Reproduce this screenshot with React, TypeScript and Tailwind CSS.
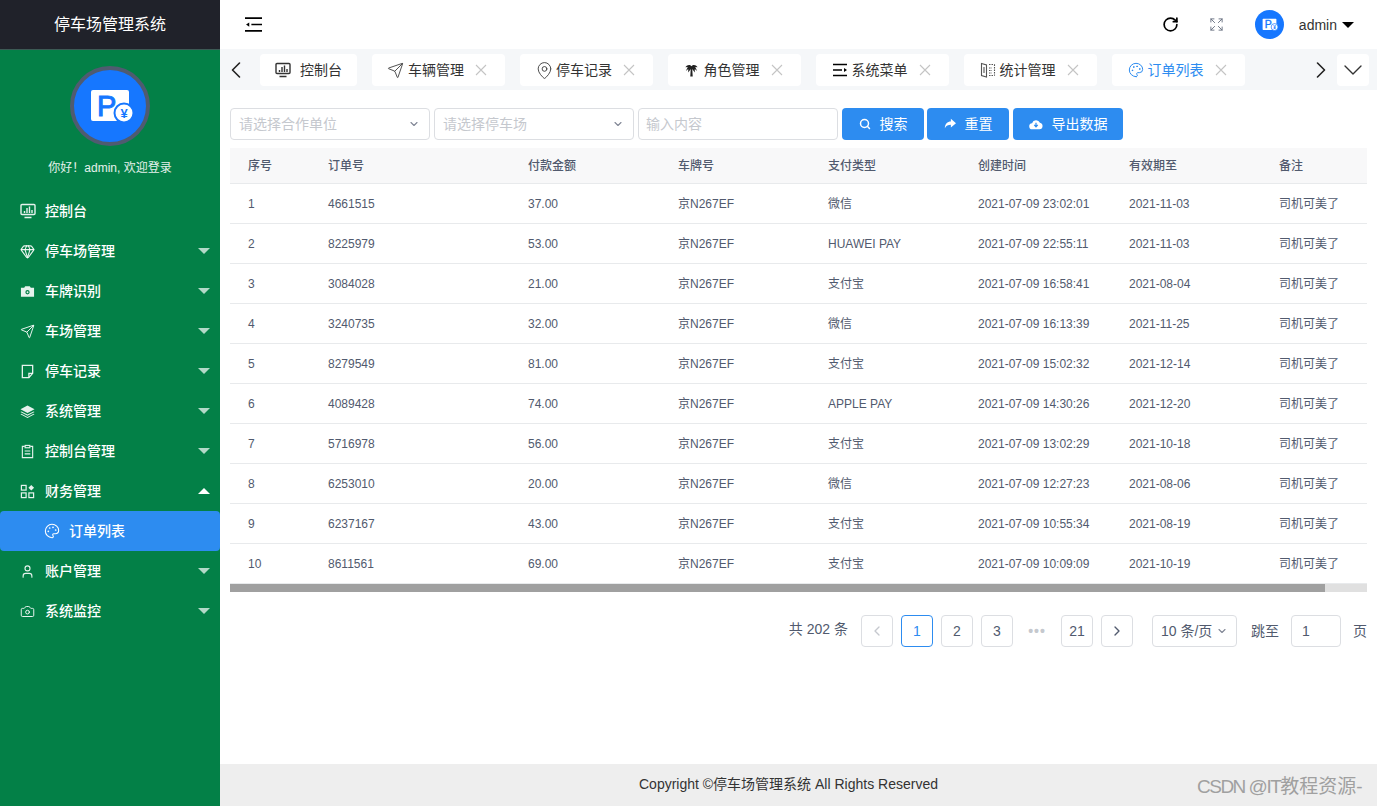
import { Camera, ChevronDown, ChevronLeft, ChevronRight, Expand, Gem, MapPin, Palette, RotateCw, Search, Send, User } from "lucide-react";
import type { ReactNode } from "react";

const FONT = "font-['Liberation_Sans','Noto_Sans_CJK_SC',sans-serif]";

function MonitorChart({ className }: { className?: string }) {
  return (
    <svg viewBox="0 0 16 16" className={className} fill="none" stroke="currentColor" strokeWidth="1.4">
      <rect x="1" y="1.500" width="14" height="10" rx="1" />
      <path d="M4.500 10V8M7 10V5M9.500 10V3.500M12 10V7M4.500 14.500h7" />
    </svg>
  );
}

function CameraSolid({ className }: { className?: string }) {
  return (
    <svg viewBox="0 0 16 16" className={className} fill="currentColor">
      <path fillRule="evenodd" d="M1 4h3.500l1-1.500h5L11.500 4H15v9.500H1zM8 6.500a2.300 2.300 0 1 0 0 4.600 2.300 2.300 0 0 0 0-4.600z" />
      <circle cx="8" cy="8.800" r="1" />
    </svg>
  );
}

function NoteFold({ className }: { className?: string }) {
  return (
    <svg viewBox="0 0 16 16" className={className} fill="none" stroke="currentColor" strokeWidth="1.4">
      <path d="M2.500 1.500h11v8.500l-4 4.500h-7z" />
      <path d="M13.500 10H9.500v4.500" />
    </svg>
  );
}

function Stack({ className }: { className?: string }) {
  return (
    <svg viewBox="0 0 16 16" className={className} fill="currentColor">
      <path d="M8 1.500L15.500 5.500 8 9.500 .5 5.500z" />
      <path d="M1.500 8L8 11.300 14.500 8 15.500 8.500 8 12.500 .5 8.500zM1.500 10.500L8 13.800 14.500 10.500 15.500 11 8 15 .5 11z" />
    </svg>
  );
}

function ClipboardLines({ className }: { className?: string }) {
  return (
    <svg viewBox="0 0 16 16" className={className} fill="none" stroke="currentColor" strokeWidth="1.2">
      <path d="M5 2.500H2.500v12h11v-12H11" />
      <rect x="5.500" y="1.500" width="5" height="2.500" />
      <path d="M5 7.500h6M5 10.500h6" />
    </svg>
  );
}

function Apps({ className }: { className?: string }) {
  return (
    <svg viewBox="0 0 16 16" className={className} fill="none" stroke="currentColor" strokeWidth="1.3">
      <rect x="1.500" y="1.500" width="5" height="5" />
      <rect x="1.500" y="9.500" width="5" height="5" />
      <rect x="9.500" y="9.500" width="5" height="5" />
      <path d="M12 1l3 3-3 3-3-3z" fill="currentColor" stroke="none" />
    </svg>
  );
}

function MenuLines({ className }: { className?: string }) {
  return (
    <svg viewBox="0 0 16 14" className={className} fill="none" stroke="currentColor" strokeWidth="1.6">
      <path d="M0 1h16M0 13h16M6 7h10" />
      <path d="M1 7l3-2v4z" fill="currentColor" stroke="none" />
    </svg>
  );
}

function TabLines({ className }: { className?: string }) {
  return (
    <svg viewBox="0 0 16 14" className={className} fill="none" stroke="currentColor" strokeWidth="1.500">
      <path d="M1 1.500h14M1 12.500h14M1 7h9" />
      <path d="M15 7l-3-2v4z" fill="currentColor" stroke="none" />
    </svg>
  );
}

function BookDots({ className }: { className?: string }) {
  return (
    <svg viewBox="0 0 16 16" className={className} fill="none" stroke="currentColor" strokeWidth="1.100">
      <path d="M1.500 1.500l5 1.500v12l-5-1.500z" />
      <path d="M4 5v6" />
      <path d="M9 2.500h5.500M9 13.500h5.500M14.500 2.500v11M9 6h3M9 8.500h3M9 11h3" strokeDasharray="1.500 1" />
    </svg>
  );
}

function Palm({ className }: { className?: string }) {
  return (
    <svg viewBox="0 0 16 16" className={className} fill="currentColor">
      <path d="M8 3.500C6.500 1.500 3.500 1.500 1.500 4.500L4 4.200 2 8.500 4.500 6.500 4.500 10 7.200 6.500 6.700 14.500h2.600L8.800 6.500 11.500 10 11.500 6.500 14 8.500 12 4.200 14.500 4.500C12.500 1.500 9.500 1.500 8 3.500z" />
    </svg>
  );
}

function CloseX() {
  return (
    <svg viewBox="0 0 12 12" className="w-3 h-3 ml-[11px] text-[#c4c4c4]" fill="none" stroke="currentColor" strokeWidth="1.100">
      <path d="M1 1l10 10M11 1L1 11" />
    </svg>
  );
}

function Logo({ size, ring }: { size: number; ring?: boolean }) {
  return (
    <svg viewBox="0 0 80 80" width={size} height={size}>
      <circle cx="40" cy="40" r={ring ? 38 : 40} fill="#1677ff" stroke={ring ? "#4f5b70" : "none"} strokeWidth={ring ? 4 : 0} />
      <rect x="21" y="24" width="38" height="31" rx="2" fill="#fff" />
      <text x="27" y="50" fontSize="29" fontWeight="400" stroke="#1677ff" strokeWidth="1" fill="#1677ff" fontFamily="Liberation Sans">P</text>
      <circle cx="54" cy="47" r="9.500" fill="#fff" stroke="#1677ff" strokeWidth="2" />
      <text x="54" y="52" fontSize="13" fontWeight="700" textAnchor="middle" fill="#1677ff" fontFamily="Liberation Sans">¥</text>
    </svg>
  );
}

function Caret({ up }: { up?: boolean }) {
  return (
    <span className={`w-0 h-0 border-x-[6px] border-x-transparent ${up ? "border-b-[6px] border-b-white" : "border-t-[6px] border-t-white/70"}`} />
  );
}

const menu: { label: string; icon: ReactNode; caret?: boolean; up?: boolean }[] = [
  { label: "控制台", icon: <MonitorChart className="w-4 h-4" /> },
  { label: "停车场管理", icon: <Gem className="w-[15px] h-[15px]" strokeWidth={1.8} />, caret: true },
  { label: "车牌识别", icon: <CameraSolid className="w-[15px] h-[15px]" />, caret: true },
  { label: "车场管理", icon: <Send className="w-[15px] h-[15px]" strokeWidth={1.6} />, caret: true },
  { label: "停车记录", icon: <NoteFold className="w-[15px] h-[15px]" />, caret: true },
  { label: "系统管理", icon: <Stack className="w-[15px] h-[15px]" />, caret: true },
  { label: "控制台管理", icon: <ClipboardLines className="w-[15px] h-[15px]" />, caret: true },
  { label: "财务管理", icon: <Apps className="w-[15px] h-[15px]" />, caret: true, up: true },
];

const menuAfter: { label: string; icon: ReactNode }[] = [
  { label: "账户管理", icon: <User className="w-[15px] h-[15px]" strokeWidth={1.8} /> },
  { label: "系统监控", icon: <Camera className="w-[15px] h-[15px]" strokeWidth={1.6} /> },
];

function MenuRow({ label, icon, caret, up }: { label: string; icon: ReactNode; caret?: boolean; up?: boolean }) {
  return (
    <div className="h-10 flex items-center pl-[20px] pr-[10px] text-white text-sm font-medium">
      <span className="w-[25px] shrink-0 text-white/90">{icon}</span>
      <span className="flex-1">{label}</span>
      {caret && <Caret up={up} />}
    </div>
  );
}

function Sidebar() {
  return (
    <aside className="w-[220px] shrink-0 bg-[#038047] flex flex-col">
      <div className="h-[50px] shrink-0 bg-[#20222a] border-b border-[#3d5a55] flex items-center justify-center text-white text-base">
        停车场管理系统
      </div>
      <div className="flex flex-col items-center pt-4 h-[141px] shrink-0">
        <Logo size={80} ring />
        <div className="mt-[14px] text-xs text-white/90">你好！admin, 欢迎登录</div>
      </div>
      {menu.map(m => <MenuRow key={m.label} {...m} />)}
      <div className="h-10 bg-[#2d8cf0] rounded-sm flex items-center pl-[44px] text-white text-sm font-medium">
        <Palette className="w-4 h-4 mr-[9px]" strokeWidth={1.6} />
        订单列表
      </div>
      {menuAfter.map(m => <MenuRow key={m.label} label={m.label} icon={m.icon} caret />)}
    </aside>
  );
}

function Header() {
  return (
    <header className="h-[49px] shrink-0 bg-white flex items-center pl-[25px] pr-[23px]">
      <MenuLines className="w-[17px] h-[15px] text-black" />
      <div className="flex-1" />
      <RotateCw className="w-[17px] h-[17px] text-black" strokeWidth={2.4} />
      <Expand className="w-[15px] h-[15px] text-gray-500 ml-[30px]" strokeWidth={1.5} />
      <span className="ml-[31px]"><Logo size={29} /></span>
      <span className="ml-[15px] text-sm text-[#333]">admin</span>
      <span className="ml-[5px] w-0 h-0 border-x-[6px] border-x-transparent border-t-[6px] border-t-black" />
    </header>
  );
}

const tabs: { label: string; icon: ReactNode; width: string; closable?: boolean; active?: boolean }[] = [
  { label: "控制台", icon: <MonitorChart className="w-4 h-4 mr-[9px]" />, width: "w-[97px]" },
  { label: "车辆管理", icon: <Send className="w-[17px] h-[17px] mr-[4px]" strokeWidth={1.2} />, width: "w-[133px]", closable: true },
  { label: "停车记录", icon: <MapPin className="w-[19px] h-[19px] mr-[2px]" strokeWidth={1.1} />, width: "w-[133px]", closable: true },
  { label: "角色管理", icon: <Palm className="w-[15px] h-[15px] mr-[5px] text-[#222]" />, width: "w-[133px]", closable: true },
  { label: "系统菜单", icon: <TabLines className="w-4 h-[14px] mr-[4px] text-black" />, width: "w-[133px]", closable: true },
  { label: "统计管理", icon: <BookDots className="w-4 h-4 mr-[4px] text-[#555]" />, width: "w-[133px]", closable: true },
  { label: "订单列表", icon: <Palette className="w-4 h-4 mr-[4px]" strokeWidth={1.5} />, width: "w-[133px]", closable: true, active: true },
];

function TabBar() {
  return (
    <div className="h-[41px] shrink-0 bg-[#f5f7f9] flex items-center pl-[2px] pr-[8px]">
      <ChevronLeft className="w-7 h-7 text-[#222] mr-[10px]" strokeWidth={1.400} />
      <div className="flex gap-[15px] flex-1">
        {tabs.map(t => (
          <div key={t.label} className={`${t.width} h-8 pt-[1px] bg-white rounded-sm flex items-center justify-center text-sm ${t.closable ? "pr-[3px]" : ""} ${t.active ? "text-[#2d8cf0]" : "text-[#333]"}`}>
            {t.icon}
            {t.label}
            {t.closable && <CloseX />}
          </div>
        ))}
      </div>
      <ChevronRight className="w-7 h-7 text-[#222] mr-[2px]" strokeWidth={1.400} />
      <div className="w-8 h-8 bg-white rounded-sm flex items-center justify-center">
        <ChevronDown className="w-8 h-8 text-[#333]" strokeWidth={1} />
      </div>
    </div>
  );
}

function SelectBox({ placeholder }: { placeholder: string }) {
  return (
    <div className="w-[200px] h-8 bg-white border border-[#dcdee2] rounded flex items-center pl-2 pr-[9px] text-sm text-[#c5c8ce]">
      <span className="flex-1">{placeholder}</span>
      <ChevronDown className="w-3 h-3 text-[#808695]" strokeWidth={2.2} />
    </div>
  );
}

function ActionButton({ label, icon, width }: { label: string; icon: ReactNode; width: string }) {
  return (
    <button className={`${width} h-8 bg-[#2d8cf0] rounded text-white text-sm flex items-center justify-center`}>
      {icon}
      {label}
    </button>
  );
}

function Filters() {
  return (
    <div className="flex mt-[18px] mx-[10px]">
      <SelectBox placeholder="请选择合作单位" />
      <div className="w-1" />
      <SelectBox placeholder="请选择停车场" />
      <div className="w-1" />
      <div className="w-[200px] h-8 bg-white border border-[#dcdee2] rounded flex items-center pl-[7px] text-sm text-[#c5c8ce]">输入内容</div>
      <div className="w-1" />
      <ActionButton label="搜索" width="w-[82px]" icon={<Search className="w-3 h-3 mr-[9px]" strokeWidth={3} />} />
      <div className="w-[3px]" />
      <ActionButton
        label="重置"
        width="w-[82px]"
        icon={
          <svg viewBox="0 0 14 12" className="w-3 h-3 mr-[9px]" fill="currentColor">
            <path d="M8 0l6 5-6 5V7C5 7 2.500 8 1 11 1 6 4 3 8 3z" />
          </svg>
        }
      />
      <div className="w-1" />
      <ActionButton
        label="导出数据"
        width="w-[110px]"
        icon={
          <svg viewBox="0 0 16 12" className="w-[14px] h-[14px] mr-[9px]">
            <path d="M4 12a3.500 3.500 0 0 1-.5-7A4.800 4.800 0 0 1 12.500 4.500 3.800 3.800 0 0 1 12 12z" fill="currentColor" />
            <path d="M8 4.500v4M6 7l2 2.200L10 7" stroke="#2d8cf0" strokeWidth="1.400" fill="none" />
          </svg>
        }
      />
    </div>
  );
}

const rows = [
  ["1", "4661515", "37.00", "微信", "2021-07-09 23:02:01", "2021-11-03"],
  ["2", "8225979", "53.00", "HUAWEI PAY", "2021-07-09 22:55:11", "2021-11-03"],
  ["3", "3084028", "21.00", "支付宝", "2021-07-09 16:58:41", "2021-08-04"],
  ["4", "3240735", "32.00", "微信", "2021-07-09 16:13:39", "2021-11-25"],
  ["5", "8279549", "81.00", "支付宝", "2021-07-09 15:02:32", "2021-12-14"],
  ["6", "4089428", "74.00", "APPLE PAY", "2021-07-09 14:30:26", "2021-12-20"],
  ["7", "5716978", "56.00", "支付宝", "2021-07-09 13:02:29", "2021-10-18"],
  ["8", "6253010", "20.00", "微信", "2021-07-09 12:27:23", "2021-08-06"],
  ["9", "6237167", "43.00", "支付宝", "2021-07-09 10:55:34", "2021-08-19"],
  ["10", "8611561", "69.00", "支付宝", "2021-07-09 10:09:09", "2021-10-19"],
];

const columns = ["序号", "订单号", "付款金额", "车牌号", "支付类型", "创建时间", "有效期至", "备注"];

function OrdersTable() {
  return (
    <div className="mt-2 mx-[10px]">
      <table className="w-[1137px] table-fixed border-separate border-spacing-0 text-xs text-[#515a6e]">
        <colgroup>
          <col className="w-[80px]" />
          <col className="w-[200px]" />
          <col className="w-[150px]" />
          <col className="w-[150px]" />
          <col className="w-[150px]" />
          <col className="w-[151px]" />
          <col className="w-[150px]" />
          <col />
        </colgroup>
        <thead>
          <tr className="h-9">
            {columns.map(c => (
              <th key={c} className="text-left font-medium pl-[18px] bg-[#f8f8f9] border-b border-[#e8eaec]">{c}</th>
            ))}
          </tr>
        </thead>
        <tbody>
          {rows.map(r => (
            <tr key={r[0]} className="h-10">
              {[r[0], r[1], r[2], "京N267EF", r[3], r[4], r[5], "司机可美了"].map((v, i) => (
                <td key={i} className="pl-[18px] border-b border-[#e8eaec]">{v}</td>
              ))}
            </tr>
          ))}
        </tbody>
      </table>
      <div className="h-2 bg-[#e0e0e0]">
        <div className="h-full w-[1095px] bg-[#a0a0a0]" />
      </div>
    </div>
  );
}

function PageBtn({ children, active }: { children: ReactNode; active?: boolean }) {
  return (
    <div className={`w-8 h-8 rounded flex items-center justify-center border text-sm ${active ? "border-[#2d8cf0] text-[#2d8cf0]" : "border-[#dcdee2] text-[#515a6e]"}`}>
      {children}
    </div>
  );
}

function Pagination() {
  return (
    <div className="flex items-center justify-end mt-[23px] pr-[10px] text-sm text-[#515a6e]">
      <span className="mr-[13px] mb-1">共 202 条</span>
      <div className="flex gap-2">
        <PageBtn><ChevronLeft className="w-4 h-4 text-[#c5c8ce]" /></PageBtn>
        <PageBtn active>1</PageBtn>
        <PageBtn>2</PageBtn>
        <PageBtn>3</PageBtn>
        <div className="w-8 h-8 flex items-center justify-center text-[#c5c8ce] tracking-[1px] font-bold">•••</div>
        <PageBtn>21</PageBtn>
        <PageBtn><ChevronRight className="w-4 h-4" /></PageBtn>
      </div>
      <div className="ml-[19px] w-[85px] h-8 border border-[#dcdee2] rounded flex items-center pl-2">
        <span className="flex-1">10 条/页</span>
        <ChevronDown className="w-3 h-3 text-[#808695] mr-2" strokeWidth={2.2} />
      </div>
      <span className="ml-[14px]">跳至</span>
      <div className="ml-3 w-[50px] h-8 border border-[#dcdee2] rounded flex items-center pl-[10px]">1</div>
      <span className="ml-3">页</span>
    </div>
  );
}

export default function App() {
  return (
    <div className={`relative w-[1377px] h-[806px] overflow-hidden flex bg-white ${FONT}`}>
      <Sidebar />
      <main className="flex-1 flex flex-col min-w-0">
        <Header />
        <TabBar />
        <Filters />
        <OrdersTable />
        <Pagination />
        <div className="flex-1" />
        <footer className="h-[42px] shrink-0 bg-[#eeeeee] flex items-center pl-[419px] pb-[2px] text-sm text-[#333]">
          Copyright ©停车场管理系统 All Rights Reserved
        </footer>
      </main>
      <div className="absolute left-[1197px] top-[775px] text-[19px] leading-[24px] text-[#a0a0a0] whitespace-nowrap">
        <span className="tracking-[-1.5px]">CSDN @IT</span>教程资源-
      </div>
    </div>
  );
}
